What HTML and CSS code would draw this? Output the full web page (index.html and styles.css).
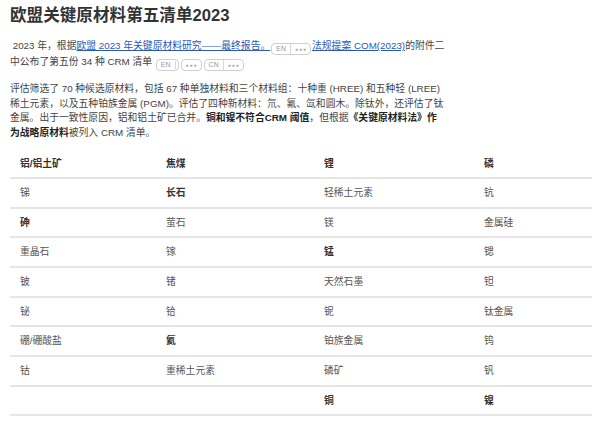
FILE: index.html
```html
<!DOCTYPE html>
<html lang="zh">
<head>
<meta charset="utf-8">
<link rel="stylesheet" href="styles.css">
</head>
<body>
<h1 class="title">欧盟关键原材料第五清单2023</h1>
<p class="para first">&nbsp;2023 年，根据<a class="link" href="#">欧盟 2023 年关键原材料研究——最终报告。</a><span class="badge"><span class="seg">EN</span><span class="seg dots">●●●</span></span><a class="link" href="#">法规提案 COM(2023)</a>的附件二中公布了第五份 34 种 CRM 清单 <span class="badge"><span class="seg">EN</span><span class="seg empty"></span></span><span class="badge"><span class="seg dots">●●●</span></span><span class="badge"><span class="seg">CN</span><span class="seg dots">●●●</span></span></p>
<p class="para">评估筛选了 70 种候选原材料，包括 67 种单独材料和三个材料组：十种重 (HREE) 和五种轻 (LREE) 稀土元素，以及五种铂族金属 (PGM)。评估了四种新材料：氘、氟、氙和圆木。除钛外，还评估了钛金属。出于一致性原因，铝和铝土矿已合并。<b>铜和镍不符合CRM 阈值</b>，但根据<b>《关键原材料法》作为战略原材料</b>被列入 CRM 清单。</p>
<table class="crm">
<thead>
<tr><th class="c1">铝/铝土矿</th><th class="c2">焦煤</th><th class="c3">锂</th><th class="c4">磷</th></tr>
</thead>
<tbody>
<tr><td>锑</td><td class="b">长石</td><td>轻稀土元素</td><td>钪</td></tr>
<tr><td class="b">砷</td><td>萤石</td><td>镁</td><td>金属硅</td></tr>
<tr><td>重晶石</td><td>镓</td><td class="b">锰</td><td>锶</td></tr>
<tr><td>铍</td><td>锗</td><td>天然石墨</td><td>钽</td></tr>
<tr><td>铋</td><td>铪</td><td>铌</td><td>钛金属</td></tr>
<tr><td>硼/硼酸盐</td><td class="b">氦</td><td>铂族金属</td><td>钨</td></tr>
<tr><td>钴</td><td>重稀土元素</td><td>磷矿</td><td>钒</td></tr>
<tr><td></td><td></td><td class="b">铜</td><td class="b">镍</td></tr>
</tbody>
</table>
</body>
</html>
```
FILE: styles.css
```css
html, body {
  margin: 0;
  padding: 0;
  background: #ffffff;
}
body {
  padding: 5px 8px 0 10px;
  font-family: "Liberation Sans", "Noto Sans CJK SC", sans-serif;
  color: #333333;
  font-size: 9.8px;
  line-height: 14.7px;
}
.title {
  margin: 0;
  font-size: 16.6px;
  line-height: 22px;
  font-weight: bold;
  color: #333333;
}
.para {
  margin: 11px 0 0 0;
  width: 436px;
  color: #444444;
}
.para.first {
  margin-top: 12px;
}
.para b {
  color: #222222;
}
.link {
  color: #2b59b8;
  text-decoration: underline;
}
.badge {
  display: inline-flex;
  align-items: center;
  box-sizing: border-box;
  height: 12px;
  border: 1px solid #cfcfcf;
  border-radius: 4px;
  vertical-align: -2px;
  margin: 0 1px;
  font-size: 7px;
  line-height: 10px;
  color: #9a9a9a;
}
.seg {
  padding: 0 4px;
}
.seg + .seg {
  border-left: 1px solid #d6d6d6;
}
.empty {
  width: 2px;
  height: 8px;
  padding: 0;
}
.dots {
  font-size: 5px;
  letter-spacing: 1px;
  padding: 0 3px 0 4px;
  color: #a8a8a8;
}
.crm {
  margin-top: 8px;
  width: 582px;
  border-collapse: collapse;
}
.crm th, .crm td {
  text-align: left;
  padding: 6px 10px 6.7px 10px;
  height: 15px;
  border-bottom: 2px solid #e6e6e6;
  font-size: 9.8px;
  line-height: 15px;
  color: #555555;
  font-weight: normal;
}
.crm th {
  font-weight: bold;
  color: #333333;
  padding-top: 7px;
  padding-bottom: 6px;
}
.crm td.b {
  font-weight: bold;
  color: #333333;
}
.c1 { width: 126px; }
.c2 { width: 138px; }
.c3 { width: 140px; }
.c4 { width: 98px; }
```
